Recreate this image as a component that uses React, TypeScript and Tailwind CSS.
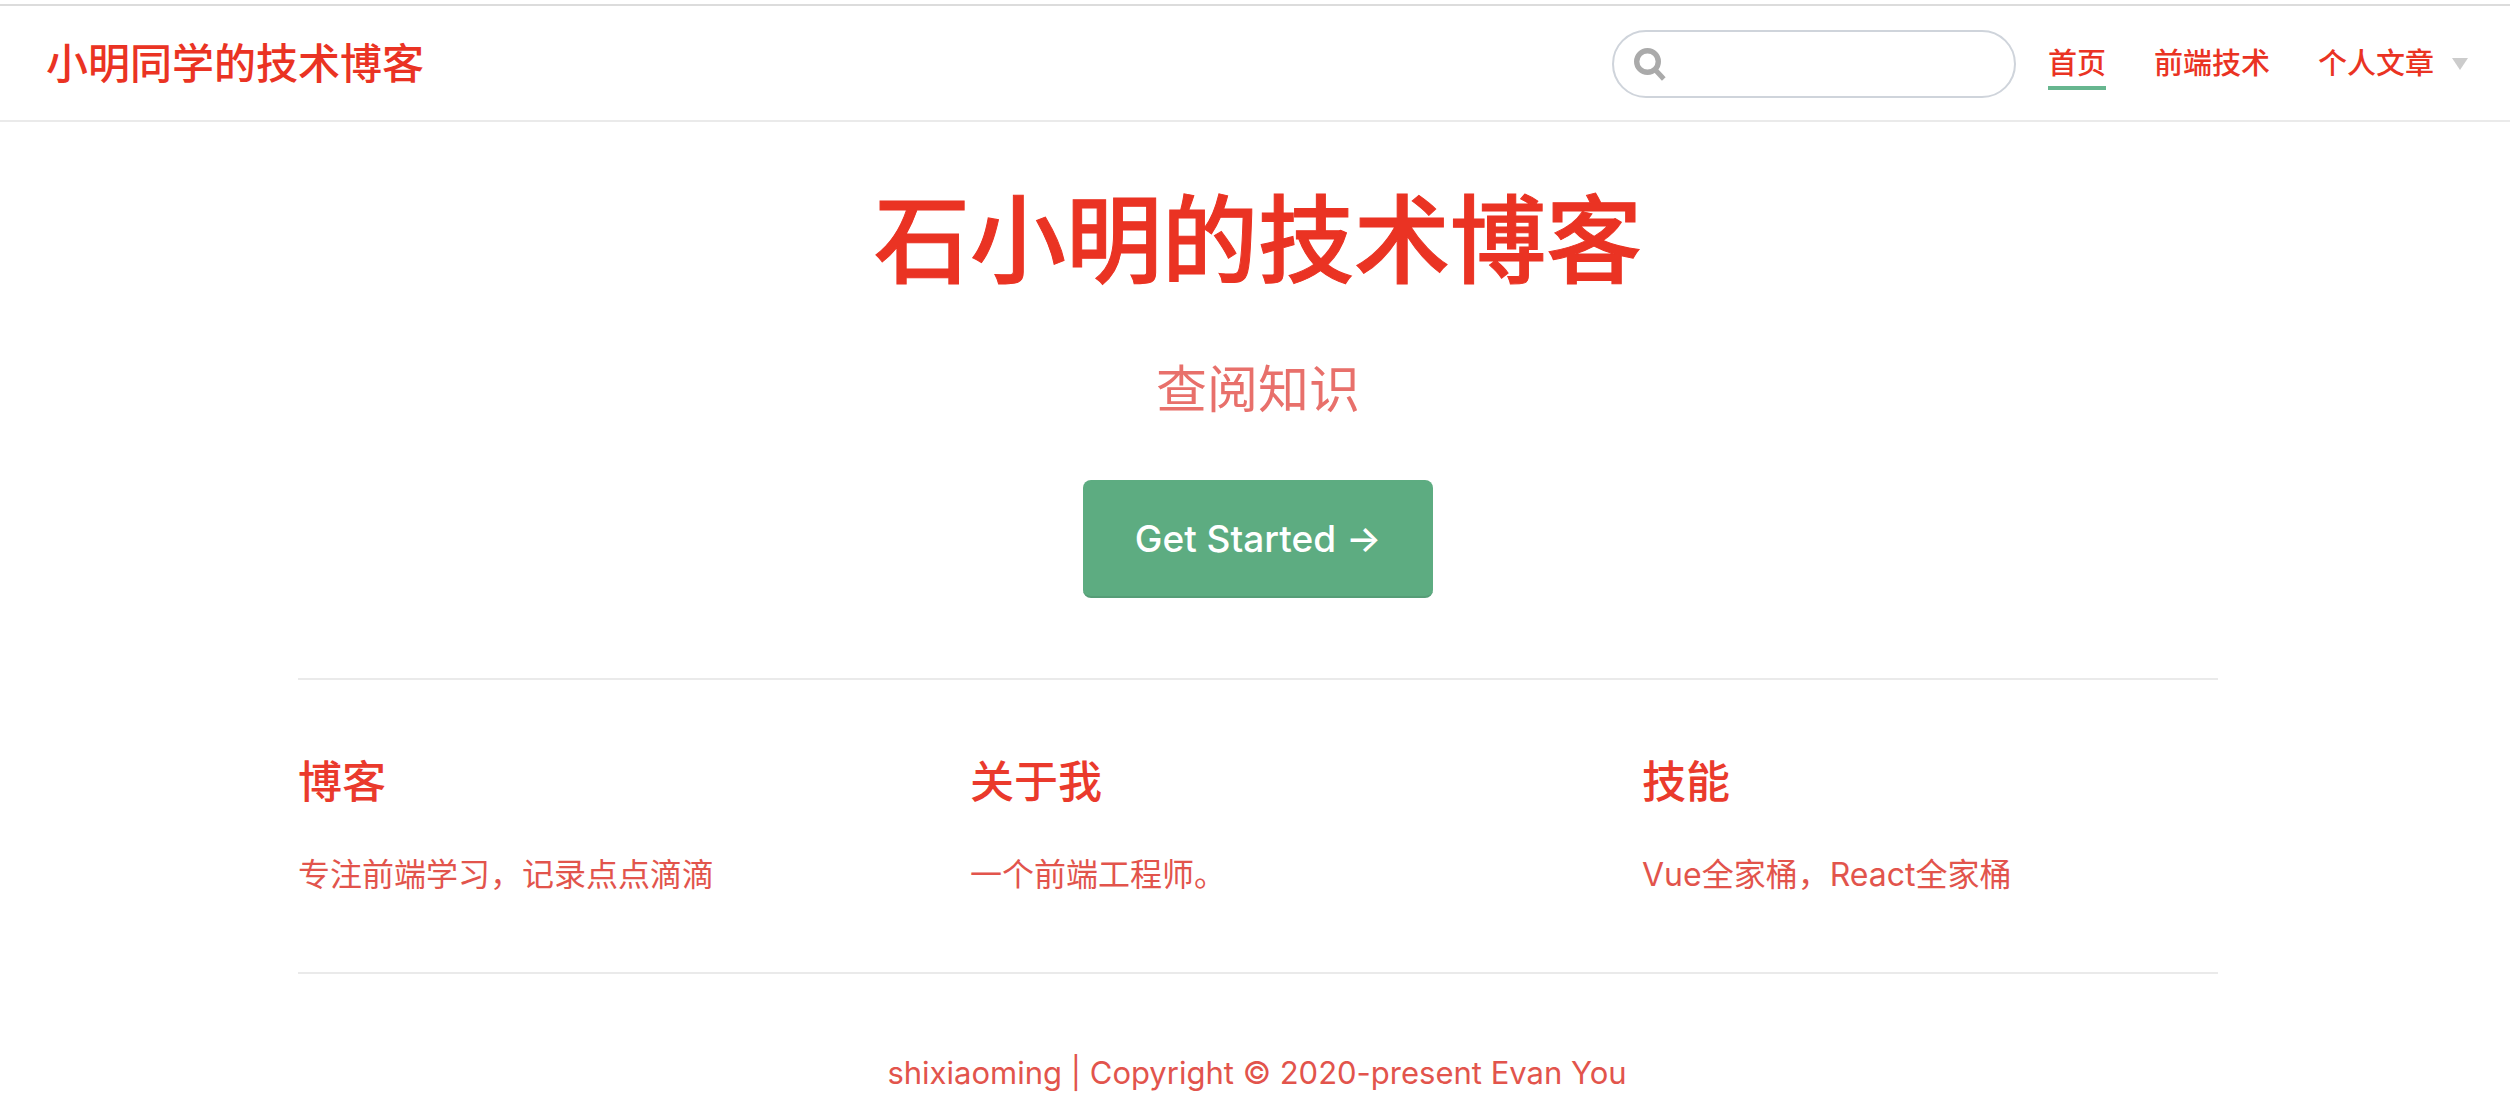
import React from "react";

const features = [
  { title: "博客", details: "专注前端学习，记录点点滴滴" },
  { title: "关于我", details: "一个前端工程师。" },
  { title: "技能", details: "Vue全家桶，React全家桶" },
];

function SearchBox() {
  return (
    <div className="relative w-[404px]">
      <svg
        viewBox="0 0 32 34"
        className="pointer-events-none absolute top-[18px] left-[22px] h-[34px] w-8"
        fill="none"
        stroke="#aaaaaa"
        aria-hidden="true"
      >
        <circle cx="13.5" cy="13.5" r="10.8" strokeWidth="5.4" />
        <path d="M20.5 21 L29.8 31" strokeWidth="5" />
      </svg>
      <input
        type="search"
        aria-label="搜索"
        className="block h-[68px] w-full rounded-full border-2 border-[#cfd4db] bg-transparent pr-4 pl-16 text-[29px] text-[#4e6e8e] outline-none"
      />
    </div>
  );
}

function Navbar() {
  return (
    <header className="mt-1 flex h-[118px] items-center justify-between border-t-2 border-b-2 border-t-[#dcdcdc] border-b-[#eaeaea] pt-[2px] pr-[42px] pl-[46px]">
      <a href="#home" className="text-[42px] leading-none font-medium">
        小明同学的技术博客
      </a>
      <div className="flex items-center gap-8">
        <SearchBox />
        <nav className="flex items-center gap-12 text-[29px] leading-[44px] font-medium">
          <a href="#home" className="mt-1 border-b-4 border-[#67b68f]">
            首页
          </a>
          <a href="#frontend">前端技术</a>
          <button type="button" className="flex items-center gap-[18px]">
            个人文章
            <span className="border-x-8 border-t-12 border-x-transparent border-t-[#cccccc]" />
          </button>
        </nav>
      </div>
    </header>
  );
}

export default function App() {
  return (
    <div className="min-h-screen bg-white font-['Inter','Noto_Sans_CJK_SC',sans-serif] text-[#ea3323]">
      <Navbar />
      <main className="mx-auto w-full max-w-[1926px] pl-[6px]">
        <section className="flex flex-col items-center pt-[58px] pb-20">
          <h1 className="text-[96px] leading-[120px] font-medium [-webkit-text-stroke:1px_#ea3323]">石小明的技术博客</h1>
          <p className="mt-14 text-[51px] leading-[68px] text-[#e8706b]">查阅知识</p>
          <a
            href="#start"
            className="mt-14 flex h-[118px] items-center rounded-lg border-b-2 border-[#569d77] bg-[#5dac81] px-[52px] text-[37px] leading-none font-medium text-white"
          >
            Get Started →
          </a>
        </section>
        <section className="flex justify-between border-y-2 border-[#eaeaea] pt-[72px] pb-[70px]">
          {features.map((f) => (
            <div key={f.title} className="w-[30%]">
              <h2 className="text-[44px] leading-[60px] font-medium text-[#ea3a2c]">{f.title}</h2>
              <p className="mt-9 text-[32px] leading-[54px] text-[#e2544c]">{f.details}</p>
            </div>
          ))}
        </section>
      </main>
      <footer className="pt-[76px] pl-[4px] text-center text-[31px] leading-[46px] text-[#e2544c]">
        shixiaoming | Copyright © 2020-present Evan You
      </footer>
    </div>
  );
}
